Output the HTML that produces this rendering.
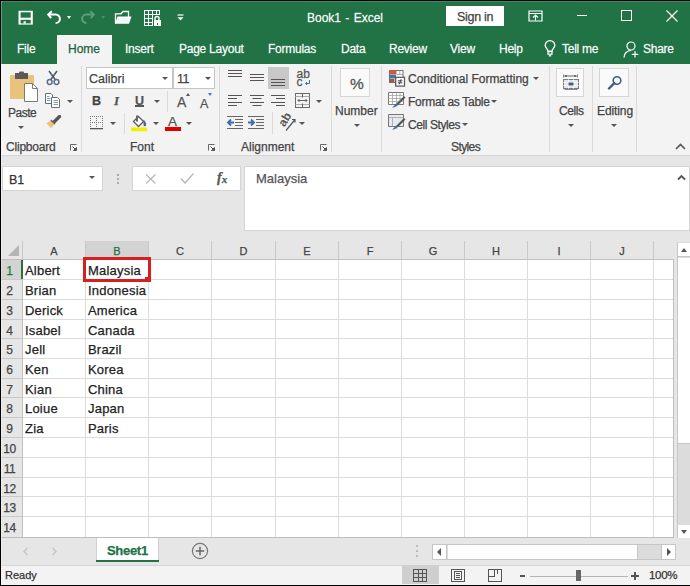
<!DOCTYPE html>
<html><head><meta charset="utf-8">
<style>
*{box-sizing:border-box;margin:0;padding:0}
html,body{width:690px;height:586px;overflow:hidden;background:#000}
body{position:relative;font-family:"Liberation Sans",sans-serif;font-size:12px;color:#444}
.a{position:absolute}
.t{position:absolute;white-space:nowrap;line-height:14px;-webkit-text-stroke-width:0.25px}
#title{left:1px;top:1px;width:689px;height:34px;background:#217346}
#tabs{left:1px;top:35px;width:689px;height:29px;background:#217346}
#ribbon{left:1px;top:64px;width:689px;height:92px;background:#f3f3f3;border-bottom:1px solid #d5d5d5}
#fbar{left:1px;top:156px;width:689px;height:85px;background:#e6e6e6}
#grid{left:1px;top:241px;width:689px;height:297px;background:#fff}
#sheetbar{left:1px;top:538px;width:689px;height:27px;background:#e6e6e6}
#status{left:1px;top:566px;width:689px;height:19px;background:#f3f3f3}
.wt{color:#fff;-webkit-text-stroke:0.3px rgba(255,255,255,0.7)}
.sep{position:absolute;width:1px;background:#dadada}
.dd{position:absolute;width:0;height:0;border-left:3px solid transparent;border-right:3px solid transparent;border-top:3px solid #555}
</style></head><body>
<!-- title bar -->
<div id="title" class="a"></div>
<svg class="a" style="left:18px;top:10px" width="16" height="16" viewBox="0 0 16 16">
 <rect x="0.5" y="0.8" width="14.3" height="13.8" fill="#fff"/>
 <rect x="2.6" y="2.3" width="10.1" height="5.4" fill="#217346"/>
 <rect x="2.6" y="9.8" width="10.1" height="3.6" fill="#217346"/>
 <rect x="5.6" y="11.3" width="2.2" height="2.2" fill="#fff"/>
</svg>
<svg class="a" style="left:46px;top:10px" width="16" height="15" viewBox="0 0 16 15">
 <path d="M2 4.6H9.8A4.2 4.2 0 0 1 9.6 13" fill="none" stroke="#fff" stroke-width="2"/>
 <path d="M5.8 1.3L2.2 4.6 5.2 8" fill="none" stroke="#fff" stroke-width="2"/>
</svg>
<div class="a" style="left:67px;top:16px;width:0;height:0;border-left:2.5px solid transparent;border-right:2.5px solid transparent;border-top:3px solid #fff"></div>
<svg class="a" style="left:80px;top:10px" width="16" height="15" viewBox="0 0 16 15">
 <path d="M14 4.6H6.2A4.2 4.2 0 0 0 6.4 13" fill="none" stroke="#5d9d7a" stroke-width="2"/>
 <path d="M10.2 1.3L13.8 4.6 10.8 8" fill="none" stroke="#5d9d7a" stroke-width="2"/>
</svg>
<div class="a" style="left:101px;top:16px;width:0;height:0;border-left:2.5px solid transparent;border-right:2.5px solid transparent;border-top:3px solid #4a8d68"></div>
<svg class="a" style="left:114px;top:10px" width="19" height="15" viewBox="0 0 19 15">
 <path d="M1.5 13.5V3.8H7L9 1.5H14.5V7" fill="none" stroke="#fff" stroke-width="1.3"/>
 <path d="M3.5 6.5H17.5L15 13.8H1z" fill="#fff"/>
 <path d="M4.6 8H15.5L13.8 12.6H3z" fill="#e9eeea" opacity="0.6"/>
</svg>
<svg class="a" style="left:144px;top:10px" width="17" height="16" viewBox="0 0 17 16" shape-rendering="crispEdges">
 <path d="M0 0h16v1H0zM0 4h16v1H0zM0 8h16v1H0zM0 12h9v1H0zM0 15h9v1H0zM0 0h1v16H0zM4 0h1v16H4zM8 0h1v16H8zM12 0h1v8h-1zM15 0h1v8h-1z" fill="#fff"/>
 <rect x="9" y="5" width="8" height="11" fill="#217346"/>
 <rect x="9.5" y="10" width="7" height="6" fill="#fff"/>
 <path d="M11 10.5V8.5a2 2 0 0 1 4 0v2" fill="none" stroke="#fff" stroke-width="1.4" shape-rendering="auto"/>
 <rect x="13" y="12.5" width="1" height="2" fill="#217346"/>
</svg>
<svg class="a" style="left:177px;top:14px" width="7" height="7" viewBox="0 0 7 7">
 <path d="M0.5 1h6" stroke="#fff" stroke-width="1.2"/>
 <path d="M0.5 3.2h6l-3 3.3z" fill="#fff"/>
</svg>
<div class="t wt" style="left:307px;top:11px;word-spacing:1px">Book1 - Excel</div>
<div class="a" style="left:446px;top:6px;width:58px;height:20px;background:#fff"></div>
<div class="t" style="left:457px;top:10px;color:#444;font-size:12.5px;letter-spacing:-0.3px">Sign in</div>
<svg class="a" style="left:528px;top:10px" width="15" height="12" viewBox="0 0 15 12">
 <path d="M1 1h13v10H1z" fill="none" stroke="#fff" stroke-width="1.2"/>
 <path d="M1 3.5h13" stroke="#fff" stroke-width="1"/>
 <path d="M7.5 10.5v-5M5 7.5l2.5-2.5 2.5 2.5" fill="none" stroke="#fff" stroke-width="1.1"/>
</svg>
<div class="a" style="left:577px;top:15px;width:10px;height:1px;background:#fff"></div>
<div class="a" style="left:621px;top:10px;width:11px;height:11px;border:1px solid #fff"></div>
<svg class="a" style="left:666px;top:10px" width="12" height="12" viewBox="0 0 12 12">
 <path d="M0.5 0.5l11 11M11.5 0.5l-11 11" stroke="#fff" stroke-width="1.1"/>
</svg>

<div id="tabs" class="a"></div>
<div class="a" style="left:57px;top:35px;width:55px;height:29px;background:#f3f3f3"></div>
<div class="t wt" style="left:17px;top:42px;letter-spacing:-0.25px">File</div>
<div class="t" style="left:68px;top:42px;color:#235f40">Home</div>
<div class="t wt" style="left:125px;top:42px;letter-spacing:-0.25px">Insert</div>
<div class="t wt" style="left:179px;top:42px;letter-spacing:-0.25px">Page Layout</div>
<div class="t wt" style="left:268px;top:42px;letter-spacing:-0.25px">Formulas</div>
<div class="t wt" style="left:341px;top:42px;letter-spacing:-0.25px">Data</div>
<div class="t wt" style="left:389px;top:42px;letter-spacing:-0.25px">Review</div>
<div class="t wt" style="left:450px;top:42px;letter-spacing:-0.25px">View</div>
<div class="t wt" style="left:499px;top:42px;letter-spacing:-0.25px">Help</div>
<svg class="a" style="left:543px;top:39px" width="14" height="19" viewBox="0 0 14 19">
 <path d="M5 12.2C5 10 2.2 8.6 2.2 6.4a4.8 4.8 0 0 1 9.6 0c0 2.2-2.8 3.6-2.8 5.8z" fill="none" stroke="#fff" stroke-width="1.3"/>
 <rect x="5" y="12.6" width="4" height="2.6" fill="none" stroke="#fff" stroke-width="1.2"/>
 <path d="M5.8 16.8h2.4" stroke="#fff" stroke-width="1.3"/>
</svg>
<div class="t wt" style="left:562px;top:42px;letter-spacing:-0.25px">Tell me</div>
<svg class="a" style="left:623px;top:41px" width="17" height="17" viewBox="0 0 17 17">
 <circle cx="8" cy="5" r="4" fill="none" stroke="#fff" stroke-width="1.2"/>
 <path d="M1 16.5c0-4 3-7 7-7" fill="none" stroke="#fff" stroke-width="1.2"/>
 <path d="M12 10v6.5M8.8 13.3h6.5" stroke="#fff" stroke-width="1.2"/>
</svg>
<div class="t wt" style="left:643px;top:42px;letter-spacing:-0.25px">Share</div>
<!-- ribbon -->
<div id="ribbon" class="a"></div>
<div class="sep" style="left:81px;top:66px;height:86px"></div>
<div class="sep" style="left:219px;top:66px;height:86px"></div>
<div class="sep" style="left:331px;top:66px;height:86px"></div>
<div class="sep" style="left:381px;top:66px;height:86px"></div>
<div class="sep" style="left:549px;top:66px;height:86px"></div>
<div class="sep" style="left:592px;top:66px;height:86px"></div>
<div class="sep" style="left:636px;top:66px;height:86px"></div>

<!-- Clipboard -->
<svg class="a" style="left:9px;top:71px" width="30" height="32" viewBox="0 0 30 32">
 <rect x="1" y="4" width="24" height="24" rx="1" fill="#e9c27c"/>
 <rect x="6" y="2" width="13" height="6" fill="#5a5a5a"/>
 <rect x="10" y="0.5" width="5" height="3" rx="1" fill="#5a5a5a"/>
 <path d="M15.5 12.5h8l5 5v13h-13z" fill="#fff" stroke="#7a7a7a" stroke-width="1"/>
 <path d="M23.5 12.5v5h5" fill="none" stroke="#7a7a7a" stroke-width="1"/>
</svg>
<div class="t" style="left:8px;top:105.5px;letter-spacing:-0.5px">Paste</div>
<div class="dd" style="left:18px;top:126px"></div>
<svg class="a" style="left:45px;top:70px" width="17" height="16" viewBox="0 0 17 16">
 <path d="M4 1l6.5 9M12 1L5.5 10" stroke="#4f5b66" stroke-width="1.6"/>
 <circle cx="4.7" cy="12" r="2.4" fill="none" stroke="#5a7089" stroke-width="1.5"/>
 <circle cx="11.5" cy="12" r="2.4" fill="none" stroke="#5a7089" stroke-width="1.5"/>
</svg>
<svg class="a" style="left:45px;top:93px" width="17" height="15" viewBox="0 0 17 15">
 <path d="M0.5 0.5h5.5l1.5 1.5v8.5h-7z" fill="#fff" stroke="#6d6d6d" stroke-width="1"/>
 <path d="M2 3.5h2.5M2 5.5h3.5M2 7.5h3.5" stroke="#7090b0" stroke-width="0.9"/>
 <path d="M6.5 4.5h6l2 2v8h-8z" fill="#fff" stroke="#6d6d6d" stroke-width="1"/>
 <path d="M8.5 7.5h4.5M8.5 9.5h4.5M8.5 11.5h4.5" stroke="#7090b0" stroke-width="0.9"/>
</svg>
<div class="dd" style="left:67px;top:100px"></div>
<svg class="a" style="left:46px;top:115px" width="16" height="13" viewBox="0 0 16 13">
 <path d="M13.5 1.5L8.5 6.5" stroke="#555" stroke-width="3.2" stroke-linecap="round"/>
 <path d="M5.5 4.5l4 4-1.2 1.2-4-4z" fill="#666"/>
 <path d="M4.3 5.7l4 4L5 13 0.5 8.5z" fill="#eec27a"/>
</svg>
<div class="t" style="left:6px;top:140px;letter-spacing:-0.2px">Clipboard</div>
<svg class="a" style="left:69px;top:143px" width="9" height="9" viewBox="0 0 9 9">
 <path d="M1.5 7.5v-6h6" fill="none" stroke="#666" stroke-width="1"/>
 <path d="M3.5 3.5l3.5 3.5M7.5 4.5v3h-3z" stroke="#555" fill="#555" stroke-width="1"/>
</svg>

<!-- Font -->
<div class="a" style="left:86px;top:67px;width:87px;height:22px;background:#fff;border:1px solid #c6c6c6"></div>
<div class="t" style="left:89px;top:72px;font-size:12.5px">Calibri</div>
<div class="dd" style="left:162px;top:77px"></div>
<div class="a" style="left:173px;top:67px;width:42px;height:22px;background:#fff;border:1px solid #c6c6c6"></div>
<div class="t" style="left:177px;top:72px;font-size:12.5px;letter-spacing:-0.5px">11</div>
<div class="dd" style="left:205px;top:77px"></div>
<div class="t" style="left:92px;top:94px;font-weight:bold;font-size:12.5px;color:#444">B</div>
<div class="t" style="left:114px;top:94px;font-style:italic;font-weight:bold;font-family:'Liberation Serif';font-size:13px;color:#555">I</div>
<div class="t" style="left:135px;top:94px;font-size:12.5px;font-weight:bold;color:#555">U</div>
<div class="a" style="left:135px;top:105px;width:9px;height:1.5px;background:#555"></div>
<div class="dd" style="left:154px;top:100px"></div>
<div class="sep" style="left:167px;top:91px;height:21px"></div>
<div class="t" style="left:177px;top:95px;font-size:14px;color:#555">A</div>
<div class="a" style="left:186px;top:93px;width:0;height:0;border-left:2px solid transparent;border-right:2px solid transparent;border-bottom:3px solid #555"></div>
<div class="t" style="left:200px;top:96.5px;font-size:12.5px;color:#555">A</div>
<div class="a" style="left:208px;top:93px;width:0;height:0;border-left:2px solid transparent;border-right:2px solid transparent;border-top:3px solid #4e77a8"></div>
<svg class="a" style="left:90px;top:116px" width="14" height="14" viewBox="0 0 14 14">
 <g fill="#777" shape-rendering="crispEdges"><rect x="0" y="0" width="1" height="1"/><rect x="0" y="10" width="1" height="1"/><rect x="0" y="2" width="1" height="1"/><rect x="0" y="4" width="1" height="1"/><rect x="0" y="6" width="1" height="1"/><rect x="0" y="8" width="1" height="1"/><rect x="10" y="0" width="1" height="1"/><rect x="10" y="6" width="1" height="1"/><rect x="12" y="0" width="1" height="1"/><rect x="12" y="10" width="1" height="1"/><rect x="12" y="2" width="1" height="1"/><rect x="12" y="4" width="1" height="1"/><rect x="12" y="6" width="1" height="1"/><rect x="12" y="8" width="1" height="1"/><rect x="2" y="0" width="1" height="1"/><rect x="2" y="6" width="1" height="1"/><rect x="4" y="0" width="1" height="1"/><rect x="4" y="6" width="1" height="1"/><rect x="6" y="0" width="1" height="1"/><rect x="6" y="10" width="1" height="1"/><rect x="6" y="2" width="1" height="1"/><rect x="6" y="4" width="1" height="1"/><rect x="6" y="6" width="1" height="1"/><rect x="6" y="8" width="1" height="1"/><rect x="8" y="0" width="1" height="1"/><rect x="8" y="6" width="1" height="1"/></g>
 <rect x="0" y="12" width="13" height="1.3" fill="#555"/>
</svg>
<div class="dd" style="left:110px;top:122px"></div>
<div class="sep" style="left:124px;top:113px;height:21px"></div>
<svg class="a" style="left:130px;top:114px" width="18" height="18" viewBox="0 0 18 18">
 <path d="M3.5 7.5l5-5 5 5-5 5z" fill="#fff" stroke="#5a5a5a" stroke-width="1.3"/>
 <path d="M7 1.5v6" stroke="#666" stroke-width="2"/>
 <path d="M13.5 5.5c1.8 2 3 3.8 2.6 5.8-0.3 1.2-2 1.4-2.6 0z" fill="#4a5f9a"/>
 <rect x="1" y="13.5" width="16" height="3.7" fill="#f2f000"/>
</svg>
<div class="dd" style="left:153px;top:122px"></div>
<div class="t" style="left:168px;top:115px;font-size:13.5px;color:#555">A</div>
<div class="a" style="left:165px;top:127px;width:16px;height:4px;background:#e00000"></div>
<div class="dd" style="left:186px;top:122px"></div>
<div class="t" style="left:130px;top:140px">Font</div>
<svg class="a" style="left:207px;top:143px" width="9" height="9" viewBox="0 0 9 9">
 <path d="M1.5 7.5v-6h6" fill="none" stroke="#666" stroke-width="1"/>
 <path d="M3.5 3.5l3.5 3.5M7.5 4.5v3h-3z" stroke="#555" fill="#555" stroke-width="1"/>
</svg>

<!-- Alignment -->
<svg class="a" style="left:226px;top:66px" width="100" height="70" viewBox="0 0 100 70">
 <g stroke="#555" stroke-width="1">
  <path d="M2 4.5h14M2 7.5h14M2 10.5h14"/>
  <path d="M24 8.5h14M24 11.5h14M24 14.5h14"/>
 </g>
 <rect x="42" y="1" width="21" height="22" fill="#c8c8c8"/>
 <g stroke="#555" stroke-width="1">
  <path d="M45 13.5h14M45 16.5h14M45 19.5h14"/>
  <path d="M2 29.5h14M2 32.5h9M2 36.5h14M2 39.5h9"/>
  <path d="M24 29.5h14M26.5 32.5h9M24 36.5h14M26.5 39.5h9"/>
  <path d="M45 29.5h14M50 32.5h9M45 36.5h14M50 39.5h9"/>
 </g>
 <rect x="69.5" y="27.5" width="14" height="14" fill="none" stroke="#6a6a6a" stroke-width="1"/>
 <path d="M69.5 30.5h14M69.5 38.5h14" stroke="#aaa" stroke-width="1"/>
 <path d="M72 34.5h9M73.5 33l-1.5 1.5 1.5 1.5M79.5 33l1.5 1.5-1.5 1.5" fill="none" stroke="#555" stroke-width="0.9"/>
 <path d="M76.5 27.5v4M76.5 37.5v4" stroke="#666" stroke-width="1"/>
 <g stroke="#666" stroke-width="1">
  <path d="M1 50.5h16M9 53.5h8M9 56.5h8M9 59.5h8M1 62.5h16"/>
  <path d="M22 50.5h16M30 53.5h8M30 56.5h8M30 59.5h8M22 62.5h16"/>
 </g>
 <path d="M8 56.5H2M5 53.5L2 56.5 5 59.5" fill="none" stroke="#3c6fa8" stroke-width="1.8"/>
 <path d="M22 56.5h6M25 53.5l3 3-3 3" fill="none" stroke="#3c6fa8" stroke-width="1.8"/>
</svg>
<div class="t" style="left:296.5px;top:70px;font-size:12px;color:#555;line-height:9px">ab</div>
<div class="t" style="left:296.5px;top:77.5px;font-size:12px;color:#555;line-height:9px">c</div>
<svg class="a" style="left:304px;top:80px" width="7" height="6" viewBox="0 0 7 6"><path d="M5.5 0v3.5H1.5M3 2L1.5 3.5 3 5" fill="none" stroke="#3c6fa8" stroke-width="1"/></svg>
<div class="dd" style="left:316px;top:100px"></div>
<div class="sep" style="left:272px;top:112px;height:22px"></div>
<svg class="a" style="left:278px;top:113px" width="20" height="19" viewBox="0 0 20 19">
 <text x="0" y="0" font-family="Liberation Sans" font-size="12" font-weight="bold" fill="#555" transform="translate(6.5 14.5) rotate(-58)">ab</text>
 <path d="M8 17.5L17 6.5M14 6.5h3v3" fill="none" stroke="#555" stroke-width="1.2"/>
</svg>
<div class="dd" style="left:299px;top:122px"></div>
<div class="t" style="left:241px;top:140px">Alignment</div>
<svg class="a" style="left:319px;top:143px" width="9" height="9" viewBox="0 0 9 9">
 <path d="M1.5 7.5v-6h6" fill="none" stroke="#666" stroke-width="1"/>
 <path d="M3.5 3.5l3.5 3.5M7.5 4.5v3h-3z" stroke="#555" fill="#555" stroke-width="1"/>
</svg>

<!-- Number -->
<div class="a" style="left:340px;top:68px;width:30px;height:29px;background:#fafafa;border:1px solid #d6d6d6"></div>
<div class="t" style="left:350px;top:77px;font-size:15.5px;color:#555;-webkit-text-stroke:0.3px #555">%</div>
<div class="t" style="left:335px;top:104px">Number</div>
<div class="dd" style="left:354px;top:124px"></div>

<!-- Styles -->
<svg class="a" style="left:388px;top:69px" width="18" height="18" viewBox="0 0 18 18">
 <rect x="1.5" y="1.5" width="13.5" height="12" fill="#fff" stroke="#6f6f6f" stroke-width="1"/>
 <rect x="1" y="1" width="7.5" height="4.5" fill="#cf5a3c"/>
 <path d="M11.8 1.5v4M8.5 5.5h6.5" stroke="#999" stroke-width="0.8"/>
 <rect x="1" y="5.8" width="7" height="3.6" fill="#3d79a8"/>
 <rect x="1" y="9.8" width="5.5" height="4.2" fill="#9b5b58"/>
 <rect x="7.7" y="8.3" width="8.8" height="8.8" fill="#fff" stroke="#555" stroke-width="1.2"/>
 <path d="M9.8 11.8h4.6M9.8 13.8h4.6M13.2 10.2l-2 5.2" stroke="#444" stroke-width="1"/>
</svg>
<div class="t" style="left:408px;top:72px">Conditional Formatting</div>
<div class="dd" style="left:533px;top:77px"></div>
<svg class="a" style="left:388px;top:92px" width="18" height="18" viewBox="0 0 18 18">
 <path d="M0.5 0.5h15v12h-15z" fill="#fff" stroke="#777" stroke-width="1"/>
 <path d="M0.5 3.5h15M0.5 6.5h15M0.5 9.5h15M4.5 0.5v12M8.5 0.5v12M12 0.5v12" stroke="#999" stroke-width="0.7"/>
 <path d="M4 16l3.5-4 2 2z" fill="#3c6fa8"/>
 <path d="M8 12l8-8 1.5 1.5-8 8z" fill="#555"/>
</svg>
<div class="t" style="left:408px;top:95px;letter-spacing:-0.28px">Format as Table</div>
<div class="dd" style="left:491px;top:100px"></div>
<svg class="a" style="left:388px;top:114px" width="18" height="18" viewBox="0 0 18 18">
 <path d="M0.5 0.5h15v12h-15z" fill="#e8e8f0" stroke="#777" stroke-width="1"/>
 <path d="M0.5 3.5h15M4.5 3.5v9" stroke="#999" stroke-width="0.7"/>
 <path d="M4 16l3.5-4 2 2z" fill="#3c6fa8"/>
 <path d="M8 12l8-8 1.5 1.5-8 8z" fill="#555"/>
</svg>
<div class="t" style="left:408px;top:118px;letter-spacing:-0.42px">Cell Styles</div>
<div class="dd" style="left:462px;top:123px"></div>
<div class="t" style="left:451px;top:140px;letter-spacing:-0.6px">Styles</div>

<!-- Cells -->
<div class="a" style="left:556px;top:68px;width:28px;height:29px;background:#fafafa;border:1px solid #d6d6d6"></div>
<svg class="a" style="left:562px;top:74px" width="18" height="17" viewBox="0 0 18 17">
 <path d="M2 2h13" stroke="#666" stroke-width="1"/>
 <path d="M1.5 0.5v3M15.5 0.5v3" stroke="#888" stroke-width="1"/>
 <circle cx="4" cy="2" r="1.1" fill="#666"/><circle cx="13" cy="2" r="1.1" fill="#666"/>
 <rect x="1.5" y="5.5" width="15" height="9" fill="#dfe7f3" stroke="#7a7a7a" stroke-width="1"/>
 <path d="M1.5 8.5h15M1.5 11.5h15M6.5 5.5v9M11.5 5.5v9" stroke="#fff" stroke-width="1"/>
 <rect x="6.5" y="8.5" width="5" height="3" fill="#4f5a74"/>
 <path d="M2.5 15.5h13" stroke="#888" stroke-width="1"/>
</svg>
<div class="t" style="left:559px;top:104px;letter-spacing:-0.4px">Cells</div>
<div class="dd" style="left:568px;top:124px"></div>

<!-- Editing -->
<div class="a" style="left:599px;top:68px;width:30px;height:29px;background:#fafafa;border:1px solid #d6d6d6"></div>
<svg class="a" style="left:607px;top:75px" width="15" height="15" viewBox="0 0 15 15">
 <circle cx="10" cy="5.5" r="3.8" fill="none" stroke="#3c5f8a" stroke-width="1.6"/>
 <path d="M7.3 8.2L2 13.5" stroke="#3c5f8a" stroke-width="2.4" stroke-linecap="round"/>
</svg>
<div class="t" style="left:597px;top:104px;letter-spacing:-0.1px">Editing</div>
<div class="dd" style="left:611px;top:124px"></div>
<svg class="a" style="left:675px;top:143px" width="11" height="7" viewBox="0 0 11 7">
 <path d="M1 6l4.5-4.5L10 6" fill="none" stroke="#555" stroke-width="1.6"/>
</svg>
<!-- formula bar -->
<div id="fbar" class="a"></div>
<div class="a" style="left:2px;top:166px;width:101px;height:25px;background:#fff;border:1px solid #d4d4d4"></div>
<div class="t" style="left:9px;top:173px;font-size:12.5px;color:#333">B1</div>
<div class="a" style="left:89px;top:176px;width:0;height:0;border-left:3.5px solid transparent;border-right:3.5px solid transparent;border-top:3.5px solid #555"></div>
<div class="a" style="left:117px;top:174px;width:1.5px;height:1.5px;background:#aaa"></div>
<div class="a" style="left:117px;top:178px;width:1.5px;height:1.5px;background:#aaa"></div>
<div class="a" style="left:117px;top:182px;width:1.5px;height:1.5px;background:#aaa"></div>
<div class="a" style="left:132px;top:166px;width:109px;height:25px;background:#fff;border:1px solid #d4d4d4"></div>
<svg class="a" style="left:145px;top:174px" width="12" height="10" viewBox="0 0 12 10"><path d="M1 0.5l9.5 9M10.5 0.5l-9.5 9" stroke="#b8b8b8" stroke-width="1.2"/></svg>
<svg class="a" style="left:180px;top:173px" width="14" height="11" viewBox="0 0 14 11"><path d="M1 5.5l4 4.5 8.5-9.5" fill="none" stroke="#b8b8b8" stroke-width="1.4"/></svg>
<div class="t" style="left:217px;top:171px;font-family:'Liberation Serif';font-style:italic;font-size:14px;color:#555;font-weight:bold">f<span style="font-size:11px;position:relative;top:1px">x</span></div>
<div class="a" style="left:244px;top:166px;width:446px;height:65px;background:#fff;border:1px solid #d4d4d4"></div>
<div class="t" style="left:256px;top:172px;font-size:13px;color:#555">Malaysia</div>
<svg class="a" style="left:677px;top:174px" width="9" height="7" viewBox="0 0 9 7"><path d="M1 5.5l3.5-3.5L8 5.5" fill="none" stroke="#555" stroke-width="1.8"/></svg>
<!-- grid -->
<div class="a" style="left:1px;top:231px;width:689px;height:10px;background:#e6e6e6"></div>
<div id="grid" class="a"></div>
<div class="a" style="left:1px;top:241px;width:673px;height:18px;background:#e6e6e6"></div>
<div class="a" style="left:674px;top:241px;width:16px;height:297px;background:#e6e6e6"></div>
<div class="a" style="left:1px;top:259px;width:21px;height:278px;background:#e6e6e6"></div>
<div class="a" style="left:86px;top:241px;width:62px;height:18px;background:#d3d3d3"></div>
<div class="a" style="left:1px;top:260px;width:21px;height:19px;background:#d3d3d3"></div>
<svg class="a" style="left:7px;top:244px" width="13" height="13" viewBox="0 0 13 13"><path d="M12 1V12H1z" fill="#b4b4b4"/></svg>
<div class="a" style="left:22px;top:241px;width:1px;height:18px;background:#c8c8c8"></div>
<div class="a" style="left:85px;top:241px;width:1px;height:18px;background:#c8c8c8"></div>
<div class="a" style="left:148px;top:241px;width:1px;height:18px;background:#c8c8c8"></div>
<div class="a" style="left:211px;top:241px;width:1px;height:18px;background:#c8c8c8"></div>
<div class="a" style="left:275px;top:241px;width:1px;height:18px;background:#c8c8c8"></div>
<div class="a" style="left:338px;top:241px;width:1px;height:18px;background:#c8c8c8"></div>
<div class="a" style="left:401px;top:241px;width:1px;height:18px;background:#c8c8c8"></div>
<div class="a" style="left:464px;top:241px;width:1px;height:18px;background:#c8c8c8"></div>
<div class="a" style="left:527px;top:241px;width:1px;height:18px;background:#c8c8c8"></div>
<div class="a" style="left:590px;top:241px;width:1px;height:18px;background:#c8c8c8"></div>
<div class="a" style="left:653px;top:241px;width:1px;height:18px;background:#c8c8c8"></div>
<div class="a" style="left:1px;top:259px;width:673px;height:1px;background:#c0c0c0"></div>
<div class="a" style="left:85px;top:260px;width:1px;height:277px;background:#dcdcdc"></div>
<div class="a" style="left:148px;top:260px;width:1px;height:277px;background:#dcdcdc"></div>
<div class="a" style="left:211px;top:260px;width:1px;height:277px;background:#dcdcdc"></div>
<div class="a" style="left:275px;top:260px;width:1px;height:277px;background:#dcdcdc"></div>
<div class="a" style="left:338px;top:260px;width:1px;height:277px;background:#dcdcdc"></div>
<div class="a" style="left:401px;top:260px;width:1px;height:277px;background:#dcdcdc"></div>
<div class="a" style="left:464px;top:260px;width:1px;height:277px;background:#dcdcdc"></div>
<div class="a" style="left:527px;top:260px;width:1px;height:277px;background:#dcdcdc"></div>
<div class="a" style="left:590px;top:260px;width:1px;height:277px;background:#dcdcdc"></div>
<div class="a" style="left:653px;top:260px;width:1px;height:277px;background:#dcdcdc"></div>
<div class="a" style="left:23px;top:279px;width:650px;height:1px;background:#dcdcdc"></div>
<div class="a" style="left:1px;top:279px;width:21px;height:1px;background:#c8c8c8"></div>
<div class="a" style="left:23px;top:299px;width:650px;height:1px;background:#dcdcdc"></div>
<div class="a" style="left:1px;top:299px;width:21px;height:1px;background:#c8c8c8"></div>
<div class="a" style="left:23px;top:319px;width:650px;height:1px;background:#dcdcdc"></div>
<div class="a" style="left:1px;top:319px;width:21px;height:1px;background:#c8c8c8"></div>
<div class="a" style="left:23px;top:338px;width:650px;height:1px;background:#dcdcdc"></div>
<div class="a" style="left:1px;top:338px;width:21px;height:1px;background:#c8c8c8"></div>
<div class="a" style="left:23px;top:358px;width:650px;height:1px;background:#dcdcdc"></div>
<div class="a" style="left:1px;top:358px;width:21px;height:1px;background:#c8c8c8"></div>
<div class="a" style="left:23px;top:378px;width:650px;height:1px;background:#dcdcdc"></div>
<div class="a" style="left:1px;top:378px;width:21px;height:1px;background:#c8c8c8"></div>
<div class="a" style="left:23px;top:397px;width:650px;height:1px;background:#dcdcdc"></div>
<div class="a" style="left:1px;top:397px;width:21px;height:1px;background:#c8c8c8"></div>
<div class="a" style="left:23px;top:417px;width:650px;height:1px;background:#dcdcdc"></div>
<div class="a" style="left:1px;top:417px;width:21px;height:1px;background:#c8c8c8"></div>
<div class="a" style="left:23px;top:437px;width:650px;height:1px;background:#dcdcdc"></div>
<div class="a" style="left:1px;top:437px;width:21px;height:1px;background:#c8c8c8"></div>
<div class="a" style="left:23px;top:457px;width:650px;height:1px;background:#dcdcdc"></div>
<div class="a" style="left:1px;top:457px;width:21px;height:1px;background:#c8c8c8"></div>
<div class="a" style="left:23px;top:477px;width:650px;height:1px;background:#dcdcdc"></div>
<div class="a" style="left:1px;top:477px;width:21px;height:1px;background:#c8c8c8"></div>
<div class="a" style="left:23px;top:496px;width:650px;height:1px;background:#dcdcdc"></div>
<div class="a" style="left:1px;top:496px;width:21px;height:1px;background:#c8c8c8"></div>
<div class="a" style="left:23px;top:516px;width:650px;height:1px;background:#dcdcdc"></div>
<div class="a" style="left:1px;top:516px;width:21px;height:1px;background:#c8c8c8"></div>
<div class="a" style="left:22px;top:260px;width:1px;height:277px;background:#c0c0c0"></div>
<div class="a" style="left:21px;top:260px;width:2px;height:19px;background:#217346"></div>
<div class="a" style="left:673px;top:259px;width:1px;height:279px;background:#bdbdbd"></div>
<div class="a" style="left:1px;top:537px;width:673px;height:1px;background:#bdbdbd"></div>
<div class="t" style="left:34.0px;width:40px;text-align:center;top:244px;font-size:11px;color:#444">A</div>
<div class="t" style="left:97.0px;width:40px;text-align:center;top:244px;font-size:11px;color:#217346">B</div>
<div class="t" style="left:160.0px;width:40px;text-align:center;top:244px;font-size:11px;color:#444">C</div>
<div class="t" style="left:223.5px;width:40px;text-align:center;top:244px;font-size:11px;color:#444">D</div>
<div class="t" style="left:287.0px;width:40px;text-align:center;top:244px;font-size:11px;color:#444">E</div>
<div class="t" style="left:350.0px;width:40px;text-align:center;top:244px;font-size:11px;color:#444">F</div>
<div class="t" style="left:413.0px;width:40px;text-align:center;top:244px;font-size:11px;color:#444">G</div>
<div class="t" style="left:476.0px;width:40px;text-align:center;top:244px;font-size:11px;color:#444">H</div>
<div class="t" style="left:539.0px;width:40px;text-align:center;top:244px;font-size:11px;color:#444">I</div>
<div class="t" style="left:602.0px;width:40px;text-align:center;top:244px;font-size:11px;color:#444">J</div>
<div class="t" style="left:-1px;width:21px;text-align:center;top:263.5px;font-size:12px;letter-spacing:-0.4px;color:#217346">1</div>
<div class="t" style="left:-1px;width:21px;text-align:center;top:283.5px;font-size:12px;letter-spacing:-0.4px;color:#444">2</div>
<div class="t" style="left:-1px;width:21px;text-align:center;top:303.5px;font-size:12px;letter-spacing:-0.4px;color:#444">3</div>
<div class="t" style="left:-1px;width:21px;text-align:center;top:323.5px;font-size:12px;letter-spacing:-0.4px;color:#444">4</div>
<div class="t" style="left:-1px;width:21px;text-align:center;top:342.5px;font-size:12px;letter-spacing:-0.4px;color:#444">5</div>
<div class="t" style="left:-1px;width:21px;text-align:center;top:362.5px;font-size:12px;letter-spacing:-0.4px;color:#444">6</div>
<div class="t" style="left:-1px;width:21px;text-align:center;top:382.5px;font-size:12px;letter-spacing:-0.4px;color:#444">7</div>
<div class="t" style="left:-1px;width:21px;text-align:center;top:401.5px;font-size:12px;letter-spacing:-0.4px;color:#444">8</div>
<div class="t" style="left:-1px;width:21px;text-align:center;top:421.5px;font-size:12px;letter-spacing:-0.4px;color:#444">9</div>
<div class="t" style="left:-1px;width:21px;text-align:center;top:441.5px;font-size:12px;letter-spacing:-0.4px;color:#444">10</div>
<div class="t" style="left:-1px;width:21px;text-align:center;top:461.5px;font-size:12px;letter-spacing:-0.4px;color:#444">11</div>
<div class="t" style="left:-1px;width:21px;text-align:center;top:481.5px;font-size:12px;letter-spacing:-0.4px;color:#444">12</div>
<div class="t" style="left:-1px;width:21px;text-align:center;top:500.5px;font-size:12px;letter-spacing:-0.4px;color:#444">13</div>
<div class="t" style="left:-1px;width:21px;text-align:center;top:520.5px;font-size:12px;letter-spacing:-0.4px;color:#444">14</div>
<div class="t" style="left:25px;top:264px;font-size:13px;letter-spacing:0.2px;color:#222">Albert</div>
<div class="t" style="left:88px;top:264px;font-size:13px;letter-spacing:0.2px;color:#222">Malaysia</div>
<div class="t" style="left:25px;top:284px;font-size:13px;letter-spacing:0.2px;color:#222">Brian</div>
<div class="t" style="left:88px;top:284px;font-size:13px;letter-spacing:0.2px;color:#222">Indonesia</div>
<div class="t" style="left:25px;top:304px;font-size:13px;letter-spacing:0.2px;color:#222">Derick</div>
<div class="t" style="left:88px;top:304px;font-size:13px;letter-spacing:0.2px;color:#222">America</div>
<div class="t" style="left:25px;top:324px;font-size:13px;letter-spacing:0.2px;color:#222">Isabel</div>
<div class="t" style="left:88px;top:324px;font-size:13px;letter-spacing:0.2px;color:#222">Canada</div>
<div class="t" style="left:25px;top:343px;font-size:13px;letter-spacing:0.2px;color:#222">Jell</div>
<div class="t" style="left:88px;top:343px;font-size:13px;letter-spacing:0.2px;color:#222">Brazil</div>
<div class="t" style="left:25px;top:363px;font-size:13px;letter-spacing:0.2px;color:#222">Ken</div>
<div class="t" style="left:88px;top:363px;font-size:13px;letter-spacing:0.2px;color:#222">Korea</div>
<div class="t" style="left:25px;top:383px;font-size:13px;letter-spacing:0.2px;color:#222">Kian</div>
<div class="t" style="left:88px;top:383px;font-size:13px;letter-spacing:0.2px;color:#222">China</div>
<div class="t" style="left:25px;top:402px;font-size:13px;letter-spacing:0.2px;color:#222">Loiue</div>
<div class="t" style="left:88px;top:402px;font-size:13px;letter-spacing:0.2px;color:#222">Japan</div>
<div class="t" style="left:25px;top:422px;font-size:13px;letter-spacing:0.2px;color:#222">Zia</div>
<div class="t" style="left:88px;top:422px;font-size:13px;letter-spacing:0.2px;color:#222">Paris</div>
<div class="a" style="left:83px;top:257px;width:68px;height:25px;border:3px solid #d81e1e"></div>
<div class="a" style="left:145px;top:277px;width:3px;height:3px;background:#d81e1e"></div>
<div class="a" style="left:677px;top:242px;width:13px;height:296px;background:#dcdcdc;border-left:1px solid #c6c6c6"></div>
<div class="a" style="left:678px;top:243px;width:12px;height:14px;background:#fff;border-bottom:1px solid #c6c6c6"></div>
<div class="a" style="left:681px;top:248px;width:0;height:0;border-left:3.5px solid transparent;border-right:3.5px solid transparent;border-bottom:4px solid #555"></div>
<div class="a" style="left:678px;top:258px;width:12px;height:186px;background:#fff;border-bottom:1px solid #c6c6c6"></div>
<div class="a" style="left:678px;top:525px;width:12px;height:13px;background:#fff"></div>
<div class="a" style="left:681px;top:530px;width:0;height:0;border-left:3.5px solid transparent;border-right:3.5px solid transparent;border-top:4px solid #555"></div>
<!-- sheet bar -->
<div id="sheetbar" class="a"></div>
<svg class="a" style="left:23px;top:547px" width="6" height="9" viewBox="0 0 6 9"><path d="M4.5 1L1 4.5 4.5 8" fill="none" stroke="#c4c4c4" stroke-width="1.3"/></svg>
<svg class="a" style="left:51px;top:547px" width="6" height="9" viewBox="0 0 6 9"><path d="M1.5 1L5 4.5 1.5 8" fill="none" stroke="#c4c4c4" stroke-width="1.3"/></svg>
<div class="a" style="left:96px;top:538px;width:63px;height:24px;background:#fff;border-left:1px solid #d0d0d0;border-right:1px solid #d0d0d0"></div>
<div class="a" style="left:96px;top:560px;width:63px;height:2px;background:#217346"></div>
<div class="t" style="left:107px;top:544px;font-size:13px;font-weight:bold;color:#217346;letter-spacing:-0.3px">Sheet1</div>
<svg class="a" style="left:191px;top:542px" width="18" height="18" viewBox="0 0 18 18"><circle cx="9" cy="9" r="7.6" fill="none" stroke="#777" stroke-width="1.2"/><path d="M9 4.8v8.4M4.8 9h8.4" stroke="#666" stroke-width="1.5"/></svg>
<div class="a" style="left:416px;top:545px;width:1.5px;height:1.5px;background:#bbb"></div>
<div class="a" style="left:416px;top:550px;width:1.5px;height:1.5px;background:#bbb"></div>
<div class="a" style="left:416px;top:555px;width:1.5px;height:1.5px;background:#bbb"></div>
<div class="a" style="left:432px;top:544px;width:244px;height:16px;background:#dcdcdc;border:1px solid #c6c6c6"></div>
<div class="a" style="left:433px;top:545px;width:14px;height:14px;background:#fff;border-right:1px solid #c6c6c6"></div>
<div class="a" style="left:437px;top:548px;width:0;height:0;border-top:4px solid transparent;border-bottom:4px solid transparent;border-right:4px solid #555"></div>
<div class="a" style="left:448px;top:545px;width:190px;height:14px;background:#fff;border-right:1px solid #c6c6c6"></div>
<div class="a" style="left:661px;top:545px;width:14px;height:14px;background:#fff;border-left:1px solid #c6c6c6"></div>
<div class="a" style="left:667px;top:548px;width:0;height:0;border-top:4px solid transparent;border-bottom:4px solid transparent;border-left:4px solid #555"></div>
<!-- status -->
<div class="a" style="left:1px;top:565px;width:689px;height:1px;background:#d6d6d6"></div>
<div id="status" class="a"></div>
<div class="t" style="left:5px;top:568px;color:#333;font-size:11px">Ready</div>
<div class="a" style="left:402px;top:565px;width:37px;height:19px;background:#cfcfcf"></div>
<svg class="a" style="left:413px;top:569px" width="14" height="13" viewBox="0 0 14 13" shape-rendering="crispEdges">
 <path d="M0 0h14v1H0zM0 4h14v1H0zM0 8h14v1H0zM0 12h14v1H0zM0 0h1v13H0zM4.5 0h1v13h-1zM8.5 0h1v13h-1zM13 0h1v13h-1z" fill="#555"/>
 <path d="M0 2.5h14v0.8H0zM0 6.5h14v0.8H0zM0 10.2h14v0.8H0z" fill="#888" opacity="0"/>
</svg>
<svg class="a" style="left:451px;top:569px" width="14" height="13" viewBox="0 0 14 13" shape-rendering="crispEdges">
 <path d="M0 0h14v1H0zM0 12h14v1H0zM0 0h1v13H0zM13 0h1v13h-1z" fill="#555"/>
 <path d="M3 2h8v1H3zM3 10h8v1H3zM3 2h1v9H3zM10 2h1v9h-1zM5 4h4v1H5zM5 6h4v1H5zM5 8h4v1H5z" fill="#555"/>
</svg>
<svg class="a" style="left:488px;top:569px" width="14" height="13" viewBox="0 0 14 13" shape-rendering="crispEdges">
 <path d="M0 0h14v1H0zM0 12h14v1H0zM0 0h1v13H0zM13 0h1v13h-1z" fill="#555"/>
 <path d="M0 7h7v1H0zM6 0h1v8H6zM9 0h1v5H9z" fill="#555"/>
</svg>
<div class="a" style="left:520px;top:575px;width:5px;height:2px;background:#555"></div>
<div class="a" style="left:530px;top:576px;width:98px;height:1px;background:#b5b5b5"></div>
<div class="a" style="left:576px;top:570px;width:5px;height:11px;background:#666"></div>
<div class="a" style="left:631px;top:575px;width:8px;height:2px;background:#555"></div>
<div class="a" style="left:634px;top:572px;width:2px;height:8px;background:#555"></div>
<div class="t" style="left:649px;top:568px;color:#333;font-size:11.5px;letter-spacing:-0.3px">100%</div>
<div class="a" style="left:1px;top:1px;width:1px;height:584px;background:rgba(255,255,255,0.3)"></div>
<div class="a" style="left:1px;top:1px;width:689px;height:1px;background:rgba(255,255,255,0.15)"></div>
</body></html>
